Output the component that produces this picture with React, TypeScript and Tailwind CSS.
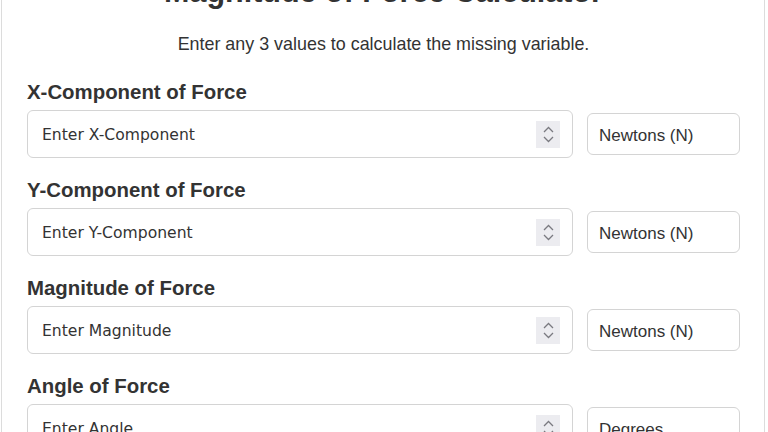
import React from "react";

const fields = [
  { label: "X-Component of Force", placeholder: "Enter X-Component", unit: "Newtons (N)" },
  { label: "Y-Component of Force", placeholder: "Enter Y-Component", unit: "Newtons (N)" },
  { label: "Magnitude of Force", placeholder: "Enter Magnitude", unit: "Newtons (N)" },
  { label: "Angle of Force", placeholder: "Enter Angle", unit: "Degrees" },
];

function Spin() {
  return (
    <div className="flex h-[27px] w-[24px] shrink-0 flex-col items-center justify-center gap-[3px] bg-[#ececf0]">
      <svg width="11" height="7" viewBox="0 0 11 7" fill="none">
        <path d="M1 6 L5.5 1.5 L10 6" stroke="#7a7a80" strokeWidth="1.3" />
      </svg>
      <svg width="11" height="7" viewBox="0 0 11 7" fill="none">
        <path d="M1 1 L5.5 5.5 L10 1" stroke="#7a7a80" strokeWidth="1.3" />
      </svg>
    </div>
  );
}

export default function App() {
  return (
    <div className="h-[432px] overflow-hidden bg-white font-['Liberation_Sans',Arial,sans-serif] text-[#333]">
      <div className="ml-[1px] -mt-[26px] w-[764px] border-x border-[#dcdcdc] pl-[25px] pr-[24px] pb-[40px]">
        <h1 className="text-center text-[30.5px] font-bold leading-[34px] text-[#333]">
          Magnitude of Force Calculator
        </h1>
        <p className="mt-[26px] text-center text-[17.9px] leading-[20px]">
          Enter any 3 values to calculate the missing variable.
        </p>
        <div className="mt-[27px] flex flex-col gap-[21px]">
          {fields.map((f) => (
            <div key={f.label} className="flex flex-col gap-[6px]">
              <label className="text-[20.4px] font-bold leading-[23px]">{f.label}</label>
              <div className="flex items-center gap-[14px]">
                <div className="flex h-[48px] flex-1 items-center rounded-[6px] border border-[#d4d4d4] bg-white pl-[14px] pr-[12px]">
                  <input
                    type="text"
                    placeholder={f.placeholder}
                    className="min-w-0 flex-1 bg-transparent pt-[3px] font-['DejaVu_Sans',sans-serif] text-[15.6px] text-[#333] outline-none placeholder:text-[#333]"
                  />
                  <Spin />
                </div>
                <div className="flex h-[42px] w-[153px] items-center rounded-[6px] border border-[#d4d4d4] bg-white px-[11px] pt-[3px] text-[17px]">
                  {f.unit}
                </div>
              </div>
            </div>
          ))}
        </div>
      </div>
    </div>
  );
}
